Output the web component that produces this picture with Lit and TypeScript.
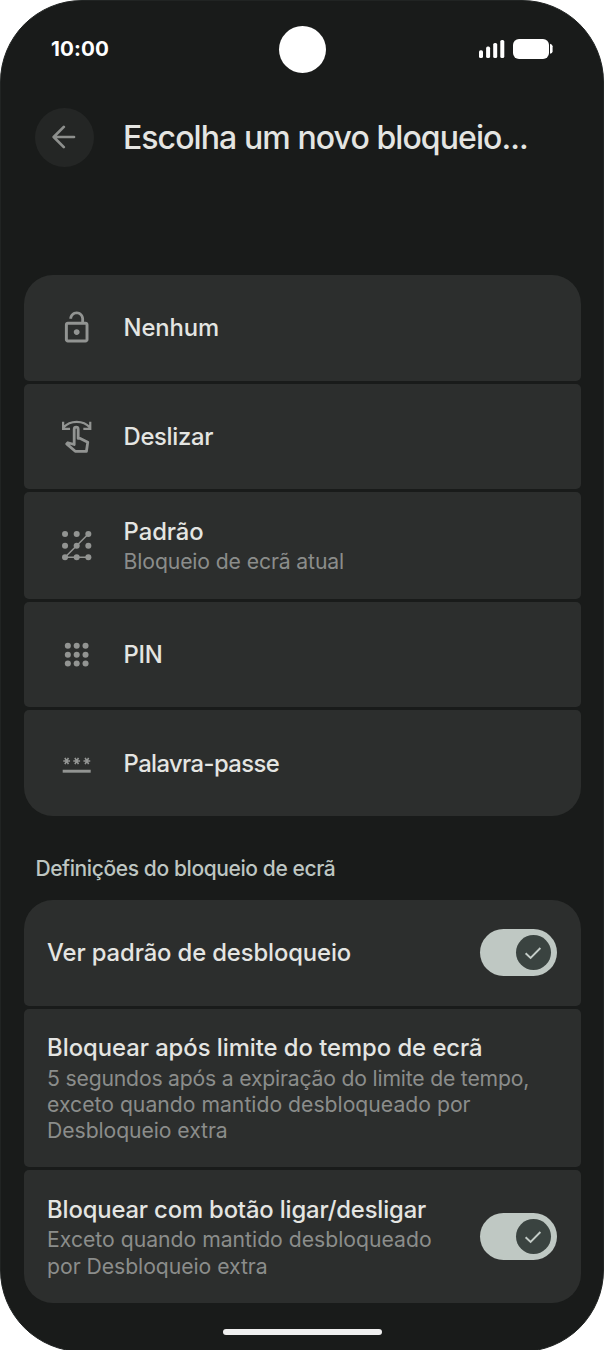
import { LitElement, html, css, svg, nothing } from "lit";
import { customElement, property } from "lit/decorators.js";

/** One line of text whose tracking is adjusted so that it fills `width` pixels. */
@customElement("text-line")
class TextLine extends LitElement {
  @property({ type: Number }) width = 0;
  @property() text = "";

  static styles = css`
    :host { display: block; white-space: nowrap; }
    .line { display: inline-block; }
  `;

  render() {
    return html`<span class="line">${this.text}</span>`;
  }

  updated() {
    const line = this.renderRoot.querySelector(".line") as HTMLElement;
    line.style.letterSpacing = "0";
    const natural = line.getBoundingClientRect().width;
    if (this.width && natural) {
      line.style.letterSpacing = `${(this.width - natural) / this.text.length}px`;
    }
  }
}

type Line = [text: string, width: number];

const burst = (x: number) => svg`<path d="M${x - 2.3} 10.2h4.6M${x - 1.2} 8.1l2.4 4.2M${x + 1.2} 8.1l-2.4 4.2"/>`;
const dots = (at: number[], r: number) =>
  at.map((y) => at.map((x) => svg`<circle cx=${x} cy=${y} r=${r} />`));

const icons = {
  unlocked: svg`<path fill="currentColor" d="M12 17c1.1 0 2-.9 2-2s-.9-2-2-2-2 .9-2 2 .9 2 2 2zm6-9h-1V6c0-2.76-2.24-5-5-5S7 3.24 7 6h1.9c0-1.71 1.39-3.1 3.1-3.1s3.1 1.39 3.1 3.1v2H6c-1.1 0-2 .9-2 2v10c0 1.1.9 2 2 2h12c1.1 0 2-.9 2-2V10c0-1.1-.9-2-2-2zm0 12H6V10h12v10z"/>`,
  swipe: svg`<g fill="none" stroke="currentColor" stroke-linejoin="round">
    <path stroke-width="1.5" stroke-linejoin="miter" d="M2.8 1.9v4.8h4.7M21.2 1.9v4.8h-4.7M3 5.8C5.2 3.3 8.4 1.9 12 1.9s6.8 1.4 9 3.9"/>
    <path stroke-width="1.9" d="M10.3 17.3V6.9a1.35 1.35 0 0 1 2.7 0v6.3h1.4l5.1 2.5-.9 6.2h-7.6l-5.8-5 .8-.8z"/></g>`,
  pattern: svg`<path fill="none" stroke="currentColor" d="M19.9 4.1 4.1 19.9h15.8"/><g fill="currentColor">${dots([4.1, 12, 19.9], 2.05)}</g>`,
  pin: svg`<g fill="currentColor">${dots([6, 12, 18], 2.05)}</g>`,
  password: svg`<g fill="none" stroke="currentColor" stroke-width="1.1">${[5.2, 12, 18.9].map(burst)}<path stroke-width="2" d="M2.5 17.1h19"/></g>`,
};

const methods: { icon: keyof typeof icons; title: Line; lines: Line[] }[] = [
  { icon: "unlocked", title: ["Nenhum", 95.5], lines: [] },
  { icon: "swipe", title: ["Deslizar", 89.5], lines: [] },
  { icon: "pattern", title: ["Padrão", 80], lines: [["Bloqueio de ecrã atual", 220.5]] },
  { icon: "pin", title: ["PIN", 39], lines: [] },
  { icon: "password", title: ["Palavra-passe", 155.5], lines: [] },
];

const settings: { title: Line; lines: Line[]; toggle: boolean }[] = [
  { title: ["Ver padrão de desbloqueio", 304], lines: [], toggle: true },
  {
    title: ["Bloquear após limite do tempo de ecrã", 435.5],
    lines: [
      ["5 segundos após a expiração do limite de tempo,", 482],
      ["exceto quando mantido desbloqueado por", 423.5],
      ["Desbloqueio extra", 180.5],
    ],
    toggle: false,
  },
  {
    title: ["Bloquear com botão ligar/desligar", 379],
    lines: [
      ["Exceto quando mantido desbloqueado", 384.5],
      ["por Desbloqueio extra", 220.5],
    ],
    toggle: true,
  },
];

@customElement("app-root")
class AppRoot extends LitElement {
  static styles = css`
    :host {
      display: block;
      height: 1350px;
      overflow: hidden;
      background: #fff;
      font-family: Inter, "Open Sans", sans-serif;
      color: #e4e5e2;
    }
    svg { display: block; flex: none; }
    .phone {
      box-sizing: border-box;
      height: 1352px;
      padding: 0 22.6px;
      border: 1px solid #212423;
      border-radius: 82px;
      background: #191b1a;
      display: flex;
      flex-direction: column;
    }
    .status {
      height: 96px;
      flex: none;
      display: grid;
      grid-template-columns: 1fr 47px 1fr;
      align-items: center;
      color: #fff;
    }
    .time { font-size: 20.6px; font-weight: 650; line-height: 26px; padding: 0 0 1px 27.4px; }
    .camera { height: 47px; border-radius: 50%; background: #fff; }
    .system { justify-self: end; margin-right: 27.6px; }
    .header { display: flex; align-items: center; margin: 10.3px 0 107.4px 11.4px; height: 60px; flex: none; }
    .back {
      width: 59px;
      height: 59px;
      border-radius: 50%;
      background: #242625;
      color: #8d8f8d;
      display: grid;
      place-items: center;
      margin-right: 28.9px;
    }
    .heading { margin: 0; padding-top: 1px; font-size: 32px; font-weight: 500; line-height: 40px; }
    .group {
      display: flex;
      flex-direction: column;
      flex: none;
      gap: 2.9px;
      width: 557px;
      border-radius: 29px;
      overflow: hidden;
    }
    .row {
      box-sizing: border-box;
      min-height: 105.95px;
      padding: 24.6px 23.5px 24.1px 23.5px;
      border-radius: 5px;
      background: #2c2e2d;
      display: flex;
      align-items: center;
    }
    .centred { padding-block: 24px; }
    .centred .words { padding-top: 2.2px; }
    .with-icon { padding-left: 35.3px; }
    .icon { color: #929492; margin-right: 29.3px; }
    .words { flex: 1; }
    .title { font-size: 23.8px; font-weight: 530; line-height: 30.8px; margin-bottom: 0.65px; }
    .detail { font-size: 21.2px; line-height: 26.15px; color: #8b8d8b; }
    .section {
      margin: 40.2px 0 17.6px 11.8px;
      font-size: 21px;
      line-height: 26px;
      color: #bec6c2;
      font-weight: 480;
    }
    .toggle {
      box-sizing: border-box;
      width: 77px;
      height: 47.5px;
      padding: 6px;
      border-radius: 24px;
      background: #bfc8c3;
      display: flex;
      justify-content: flex-end;
      margin-top: -0.6px;
    }
    .knob {
      width: 35.5px;
      height: 35.5px;
      border-radius: 50%;
      background: #3a4340;
      color: #c3ccc7;
      display: grid;
      place-items: center;
    }
    .home {
      width: 159px;
      height: 6px;
      border-radius: 3px;
      background: #efefef;
      align-self: center;
      margin-top: 26.6px;
    }
  `;

  private words(title: Line, lines: Line[]) {
    return html`<div class="words">
      <text-line class="title" .text=${title[0]} .width=${title[1]}></text-line>
      ${lines.map(([t, w]) => html`<text-line class="detail" .text=${t} .width=${w}></text-line>`)}
    </div>`;
  }

  private toggle() {
    return html`<div class="toggle" role="switch" aria-checked="true">
      <div class="knob">
        <svg width="18" height="14" viewBox="0 0 18 14" fill="none" stroke="currentColor" stroke-width="1.9">
          <path d="M1.6 7.2 6.6 12 16.4 2"/>
        </svg>
      </div>
    </div>`;
  }

  render() {
    return html`<div class="phone">
      <div class="status">
        <text-line class="time" .text=${"10:00"} .width=${58}></text-line>
        <div class="camera"></div>
        <svg class="system" width="74" height="22" viewBox="0 0 74 22" fill="#fff">
          <rect x="0" y="12.3" width="4" height="7.7" rx="1.6"/>
          <rect x="7.1" y="8.6" width="4" height="11.4" rx="1.6"/>
          <rect x="14.2" y="4.9" width="4" height="15.1" rx="1.6"/>
          <rect x="21.3" y="2" width="4" height="18" rx="1.6"/>
          <rect x="34" y="1" width="36" height="20" rx="6"/>
          <path d="M71 5.8q2.6.6 2.6 2.4v5.2q0 1.8-2.6 2.4z"/>
        </svg>
      </div>
      <div class="header">
        <div class="back">
          <svg width="24" height="24" viewBox="0 0 24 24" fill="none" stroke="currentColor" stroke-width="2.7" stroke-linecap="round" stroke-linejoin="round">
            <path d="M22 12H1.8M11.8 1.9 1.7 12l10.1 10.1"/>
          </svg>
        </div>
        <text-line class="heading" role="heading" .text=${"Escolha um novo bloqueio..."} .width=${405}></text-line>
      </div>
      <div class="group">
        ${methods.map(
          (m) => html`<div class="row with-icon ${m.lines.length ? "" : "centred"}">
            <svg class="icon" width="35.4" height="35.4" viewBox="0 0 24 24">${icons[m.icon]}</svg>
            ${this.words(m.title, m.lines)}
          </div>`,
        )}
      </div>
      <text-line class="section" .text=${"Definições do bloqueio de ecrã"} .width=${300}></text-line>
      <div class="group">
        ${settings.map(
          (s) => html`<div class="row ${s.lines.length ? "" : "centred"}">
            ${this.words(s.title, s.lines)} ${s.toggle ? this.toggle() : nothing}
          </div>`,
        )}
      </div>
      <div class="home"></div>
    </div>`;
  }
}
